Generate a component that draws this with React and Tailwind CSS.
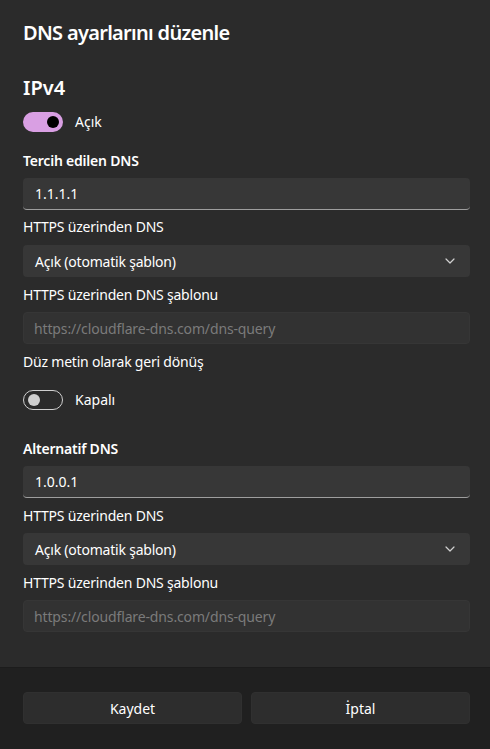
import React from "react";

const font = { fontFamily: '"Segoe UI", "Noto Sans", "Open Sans", sans-serif' };

function Label({ children, bold, className = "" }) {
  return (
    <div className={`text-[14px] leading-5 tracking-[-0.015em] text-[#ffffff] ${bold ? "font-semibold" : ""} ${className}`}>
      {children}
    </div>
  );
}

function TextInput({ value, className = "" }) {
  return (
    <div className={`h-8 rounded-[4px] bg-[#373737] border-b border-[#9e9e9e] flex items-center px-3 text-[14px] text-white ${className}`}>
      {value}
    </div>
  );
}

function DisabledInput({ placeholder, className = "" }) {
  return (
    <div className={`h-8 rounded-[4px] bg-[#323232] border border-[#363636] flex items-center px-[10px] text-[14px] tracking-[-0.01em] text-[#7b7b7b] ${className}`}>
      {placeholder}
    </div>
  );
}

function Select({ value, className = "" }) {
  return (
    <div className={`h-8 rounded-[4px] bg-[#373737] flex items-center justify-between pl-3 pr-[15px] text-[14px] tracking-[-0.015em] text-white ${className}`}>
      <span>{value}</span>
      <svg width="10" height="6" viewBox="0 0 10 6" fill="none">
        <path d="M1 1l4 4 4-4" stroke="#d0d0d0" strokeWidth="1.2" strokeLinecap="round" strokeLinejoin="round" />
      </svg>
    </div>
  );
}

function ToggleOn() {
  return (
    <div className="w-10 h-5 rounded-full bg-[#d99fe3] flex items-center justify-end pr-[4px]">
      <div className="w-[12px] h-[12px] rounded-full bg-black" />
    </div>
  );
}

function ToggleOff() {
  return (
    <div className="w-10 h-5 rounded-full border border-[#cfcfcf] flex items-center pl-[4px]">
      <div className="w-[12px] h-[12px] rounded-full bg-[#d0d0d0]" />
    </div>
  );
}

export default function App() {
  return (
    <div style={font} className="w-[490px] h-[749px] bg-[#2b2b2b] flex flex-col text-white overflow-hidden">
      <div className="flex-1 pl-[23px] pr-[20px] pt-[19px] flex flex-col">
        <div className="text-[20px] leading-7 font-semibold tracking-[-0.035em]">DNS ayarlarını düzenle</div>
        <div className="text-[20px] leading-7 font-semibold mt-[27px]">IPv4</div>
        <div className="flex items-center mt-[9px] gap-3">
          <ToggleOn />
          <span className="text-[14px]">Açık</span>
        </div>
        <Label bold className="mt-[19px]">Tercih edilen DNS</Label>
        <TextInput value="1.1.1.1" className="mt-[7px]" />
        <Label className="mt-[7px]">HTTPS üzerinden DNS</Label>
        <Select value="Açık (otomatik şablon)" className="mt-2" />
        <Label className="mt-2">HTTPS üzerinden DNS şablonu</Label>
        <DisabledInput placeholder="https://cloudflare-dns.com/dns-query" className="mt-[7px]" />
        <Label className="mt-2">Düz metin olarak geri dönüş</Label>
        <div className="flex items-center mt-[17px] gap-3">
          <ToggleOff />
          <span className="text-[14px]">Kapalı</span>
        </div>
        <Label bold className="mt-[29px]">Alternatif DNS</Label>
        <TextInput value="1.0.0.1" className="mt-[7px]" />
        <Label className="mt-2">HTTPS üzerinden DNS</Label>
        <Select value="Açık (otomatik şablon)" className="mt-[7px]" />
        <Label className="mt-2">HTTPS üzerinden DNS şablonu</Label>
        <DisabledInput placeholder="https://cloudflare-dns.com/dns-query" className="mt-[7px]" />
      </div>
      <div className="h-[82px] bg-[#202020] border-t border-[#1c1c1c] pl-[23px] pr-[20px] pt-[24px] flex gap-[9px]">
        <button className="flex-1 h-8 rounded-[4px] bg-[#2d2d2d] border border-[#303030] text-[14px] text-white">Kaydet</button>
        <button className="flex-1 h-8 rounded-[4px] bg-[#2d2d2d] border border-[#303030] text-[14px] text-white">İptal</button>
      </div>
    </div>
  );
}
